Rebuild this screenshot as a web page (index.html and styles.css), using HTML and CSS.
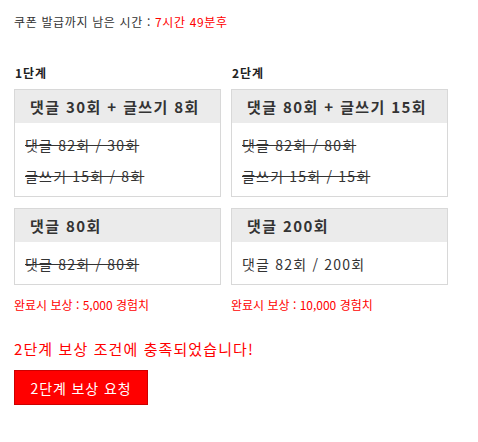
FILE: index.html
```html
<!DOCTYPE html>
<html lang="ko">
<head>
<meta charset="utf-8">
<link rel="stylesheet" href="styles.css">
</head>
<body>
<div class="page">
  <p class="timer">쿠폰 발급까지 남은 시간 : <span class="red">7시간 49분후</span></p>
  <div class="stages">
    <div class="stage s1">
      <h3 class="stage-title">1단계</h3>
      <div class="box">
        <div class="box-head">댓글 30회 + 글쓰기 8회</div>
        <div class="box-body tall">
          <div class="line done">댓글 82회 / 30회</div>
          <div class="line done">글쓰기 15회 / 8회</div>
        </div>
      </div>
      <div class="box">
        <div class="box-head">댓글 80회</div>
        <div class="box-body">
          <div class="line done">댓글 82회 / 80회</div>
        </div>
      </div>
      <p class="reward">완료시 보상 : 5,000 경험치</p>
    </div>
    <div class="stage s2">
      <h3 class="stage-title">2단계</h3>
      <div class="box">
        <div class="box-head">댓글 80회 + 글쓰기 15회</div>
        <div class="box-body tall">
          <div class="line done">댓글 82회 / 80회</div>
          <div class="line done">글쓰기 15회 / 15회</div>
        </div>
      </div>
      <div class="box">
        <div class="box-head">댓글 200회</div>
        <div class="box-body">
          <div class="line">댓글 82회 / 200회</div>
        </div>
      </div>
      <p class="reward">완료시 보상 : 10,000 경험치</p>
    </div>
  </div>
  <p class="notice">2단계 보상 조건에 충족되었습니다!</p>
  <button class="btn">2단계 보상 요청</button>
</div>
</body>
</html>
```
FILE: styles.css
```css
* { box-sizing: border-box; }
body {
  margin: 0;
  background: #fff;
  font-family: "Noto Sans CJK KR", "Noto Sans", sans-serif;
  color: #333;
}
.page { padding: 12px 14px; }
.timer {
  margin: 0;
  font-size: 12px;
  line-height: 20px;
  letter-spacing: 0.65px;
  color: #333;
}
.red { color: #f00; }
.stages {
  display: grid;
  grid-template-columns: 207px 217px;
  column-gap: 10px;
  margin-top: 31px;
}
.stage-title {
  margin: 0 0 6px 1px;
  font-size: 12px;
  font-weight: bold;
  line-height: 20px;
  letter-spacing: 1px;
  color: #222;
}
.box {
  border: 1px solid #d8d8d8;
  margin-bottom: 11px;
}
.box-head {
  background: #ebebeb;
  height: 33px;
  line-height: 33px;
  padding-left: 15px;
  font-size: 15px;
  font-weight: bold;
  letter-spacing: 1.4px;
  color: #333;
}
.box-body {
  padding: 7px 10px 0;
  height: 42px;
}
.box-body.tall { height: 73px; padding-top: 7px; }
.line {
  font-size: 14px;
  line-height: 31px;
  letter-spacing: 1.2px;
  color: #333;
}
.line.done { text-decoration: line-through; }
.reward {
  margin: -1px 0 0;
  font-size: 12px;
  line-height: 20px;
  color: #f00;
}
.notice {
  margin: 24px 0 0;
  font-size: 15px;
  line-height: 20px;
  letter-spacing: 1.1px;
  color: #f00;
}
.btn {
  display: block;
  margin-top: 11px;
  width: 134px;
  height: 35px;
  background: #f00;
  border: 1px solid #c00;
  color: #fff;
  font-family: "Noto Sans CJK KR", "Noto Sans", sans-serif;
  font-size: 14px;
  letter-spacing: 0.9px;
  padding: 0;
}
```
